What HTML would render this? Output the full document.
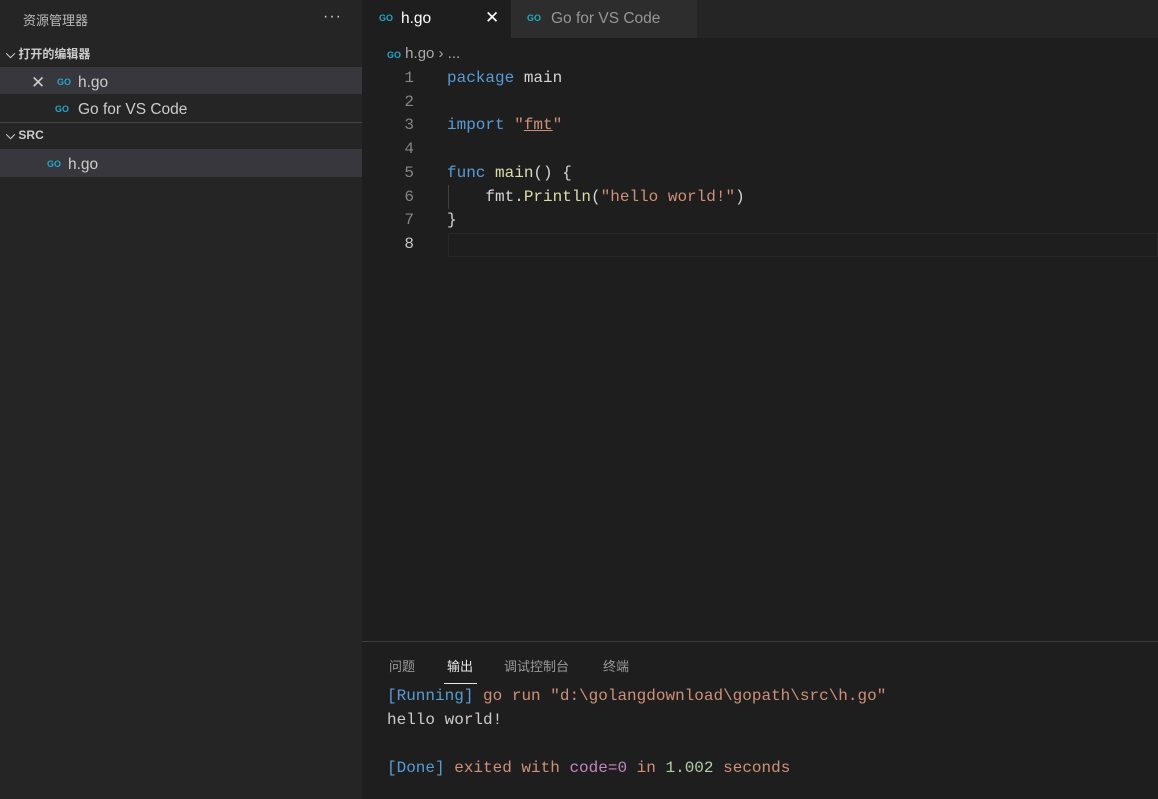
<!DOCTYPE html>
<html><head><meta charset="utf-8"><style>
*{margin:0;padding:0;box-sizing:border-box}
body{width:1158px;height:799px;background:#1e1e1e;position:relative;overflow:hidden;font-family:"Liberation Sans","Noto Sans CJK SC",sans-serif;color:#ccc}
.abs{position:absolute}
.side{left:0;top:0;width:362px;height:799px;background:#252526}
.mono{font-family:"Liberation Mono",monospace;font-size:16px;white-space:pre}
.go{display:inline-block;font:bold 9px/10px "Liberation Sans",sans-serif;color:#20a8c8;letter-spacing:0}
.row{left:0;width:362px;height:27px;font-size:15.5px;color:#ccc;line-height:27px}
.row .t{top:2px}
.row .go{top:10px}
.kw{color:#569cd6}.str{color:#ce9178}.fn{color:#dcdcaa}
</style></head><body>
<div class="abs side">
 <div class="abs" style="left:23px;top:10px;font-size:13px;color:#bbb">资源管理器</div>
 <div class="abs" style="left:323px;top:8px;font-size:16px;color:#ccc;letter-spacing:1px">···</div>
 <div class="abs" style="left:6px;top:45px;font-size:12px;font-weight:bold;color:#ccc">⌵ 打开的编辑器</div>
 <div class="abs row" style="top:67px;background:#37373d"><span class="abs t" style="left:31px;font-size:17px">✕</span><span class="abs go" style="left:57px">GO</span><span class="abs t" style="left:78px">h.go</span></div>
 <div class="abs row" style="top:94px"><span class="abs go" style="left:55px">GO</span><span class="abs t" style="left:78px">Go for VS Code</span></div>
 <div class="abs" style="left:0;top:122px;width:362px;height:1px;background:#444"></div>
 <div class="abs" style="left:6px;top:128px;font-size:12px;font-weight:bold;color:#ccc">⌵ SRC</div>
 <div class="abs row" style="top:149px;height:28px;background:#37373d"><span class="abs go" style="left:47px">GO</span><span class="abs t" style="left:68px">h.go</span></div>
</div>
<div class="abs" style="left:362px;top:0;width:796px;height:38px;background:#252526"></div>
<div class="abs" style="left:362px;top:0;width:149px;height:38px;background:#1e1e1e">
 <span class="abs go" style="left:17px;top:13px">GO</span>
 <span class="abs" style="left:39px;top:10px;font-size:15.5px;color:#fff">h.go</span>
 <span class="abs" style="left:123px;top:8px;font-size:17px;color:#fff">✕</span>
</div>
<div class="abs" style="left:511px;top:0;width:186px;height:38px;background:#2d2d2d">
 <span class="abs go" style="left:16px;top:13px">GO</span>
 <span class="abs" style="left:40px;top:10px;font-size:15.5px;color:#969696">Go for VS Code</span>
</div>
<div class="abs" style="left:387px;top:45px;font-size:15px;color:#aaa"><span class="go">GO</span> h.go › ...</div>
<div class="abs" style="left:448px;top:233px;width:710px;height:24px;border:1px solid #282828"></div>
<div class="abs" style="left:448px;top:185px;width:1px;height:24px;background:#404040"></div>
<div class="abs mono" style="left:374px;top:67px;line-height:23.7px;width:40px;text-align:right;color:#858585">1
2
3
4
5
6
7
<span style="color:#c6c6c6">8</span></div>
<div class="abs mono" style="left:447px;top:67px;line-height:23.7px;color:#d4d4d4"><span class="kw">package</span> main

<span class="kw">import</span> <span class="str">"<u style="text-decoration-color:#ce9178">fmt</u>"</span>

<span class="kw">func</span> <span class="fn">main</span>() {
    fmt.<span class="fn">Println</span>(<span class="str">"hello world!"</span>)
}
</div>
<div class="abs" style="left:362px;top:641px;width:796px;height:158px;background:#1e1e1e;border-top:1px solid #3c3c3c">
 <div class="abs" style="left:27px;top:14px;font-size:13px;color:#999">问题</div>
 <div class="abs" style="left:85px;top:14px;font-size:13px;color:#e7e7e7">输出</div>
 <div class="abs" style="left:82px;top:41px;width:33px;height:1px;background:#e7e7e7"></div>
 <div class="abs" style="left:142px;top:14px;font-size:13px;color:#999">调试控制台</div>
 <div class="abs" style="left:241px;top:14px;font-size:13px;color:#999">终端</div>
 <div class="abs mono" style="left:25px;top:42px;line-height:24px;color:#ccc"><span class="kw">[Running]</span> <span class="str">go run "d:\golangdownload\gopath\src\h.go"</span>
hello world!

<span class="kw">[Done]</span> <span class="str">exited with</span> <span style="color:#c586c0">code=0</span> <span class="str">in</span> <span style="color:#b5cea8">1.002</span> <span class="str">seconds</span></div>
</div>
</body></html>
